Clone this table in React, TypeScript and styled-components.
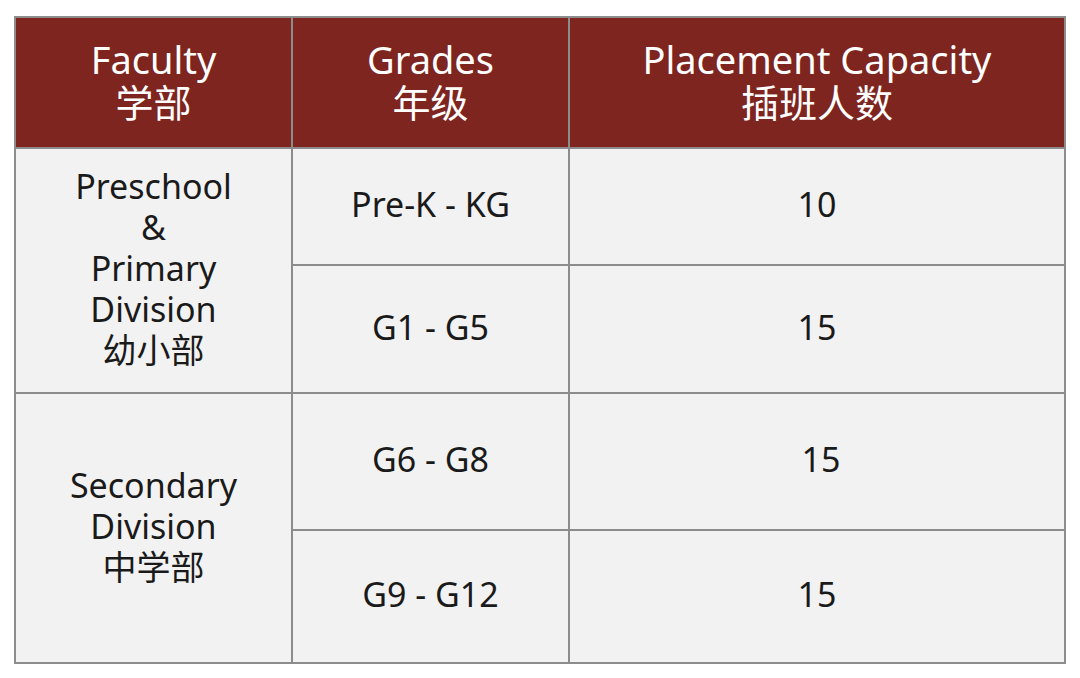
import React from "react";
import styled, { createGlobalStyle } from "styled-components";

const GlobalStyle = createGlobalStyle`
  html, body {
    margin: 0;
    padding: 0;
    background: #ffffff;
  }
  body {
    font-family: "Noto Sans", "Noto Sans CJK SC", sans-serif;
  }
`;

interface Row {
  faculty?: { lines: string[]; span: number };
  grades: string;
  capacity: string;
  height: number;
  nudge?: number;
}

const rows: Row[] = [
  {
    faculty: { lines: ["Preschool", "&", "Primary", "Division", "幼小部"], span: 2 },
    grades: "Pre-K - KG",
    capacity: "10",
    height: 117,
  },
  { grades: "G1 - G5", capacity: "15", height: 128 },
  {
    faculty: { lines: ["Secondary", "Division", "中学部"], span: 2 },
    grades: "G6 - G8",
    capacity: "15",
    height: 137,
    nudge: 8,
  },
  { grades: "G9 - G12", capacity: "15", height: 133 },
];

export default function App() {
  return (
    <>
      <GlobalStyle />
      <Page>
        <Table>
          <colgroup>
            <col style={{ width: 277 }} />
            <col style={{ width: 277 }} />
            <col style={{ width: 496 }} />
          </colgroup>
          <thead>
            <tr>
              <Head>
                Faculty
                <br />
                学部
              </Head>
              <Head>
                Grades
                <br />
                年级
              </Head>
              <Head>
                Placement Capacity
                <br />
                插班人数
              </Head>
            </tr>
          </thead>
          <tbody>
            {rows.map((r, i) => (
              <BodyRow key={i} $h={r.height}>
                {r.faculty && (
                  <Cell rowSpan={r.faculty.span}>
                    {r.faculty.lines.map((l, j) => (
                      <Line key={j}>{l}</Line>
                    ))}
                  </Cell>
                )}
                <Cell>{r.grades}</Cell>
                <Cell $nudge={r.nudge}>{r.capacity}</Cell>
              </BodyRow>
            ))}
          </tbody>
        </Table>
      </Page>
    </>
  );
}

const Page = styled.div`
  padding: 16px 0 0 14px;
`;

const Table = styled.table`
  border-collapse: collapse;
  table-layout: fixed;
  width: 1050px;
  border: 2px solid #8c8c8c;
`;

const Head = styled.th`
  height: 125px;
  padding: 0 0 4px;
  background: #7e2520;
  color: #ffffff;
  font-weight: 400;
  font-size: 38px;
  line-height: 43px;
  text-align: center;
  vertical-align: middle;
  border: 2px solid #8c8c8c;
`;

const BodyRow = styled.tr<{ $h: number }>`
  height: ${(p) => p.$h}px;
`;

const Cell = styled.td<{ $nudge?: number }>`
  padding: 0 0 4px ${(p) => p.$nudge ?? 0}px;
  background: #f2f2f2;
  color: #1a1a1a;
  font-size: 34px;
  line-height: 41px;
  text-align: center;
  vertical-align: middle;
  border: 2px solid #8c8c8c;
`;

const Line = styled.div`
  white-space: nowrap;
`;
